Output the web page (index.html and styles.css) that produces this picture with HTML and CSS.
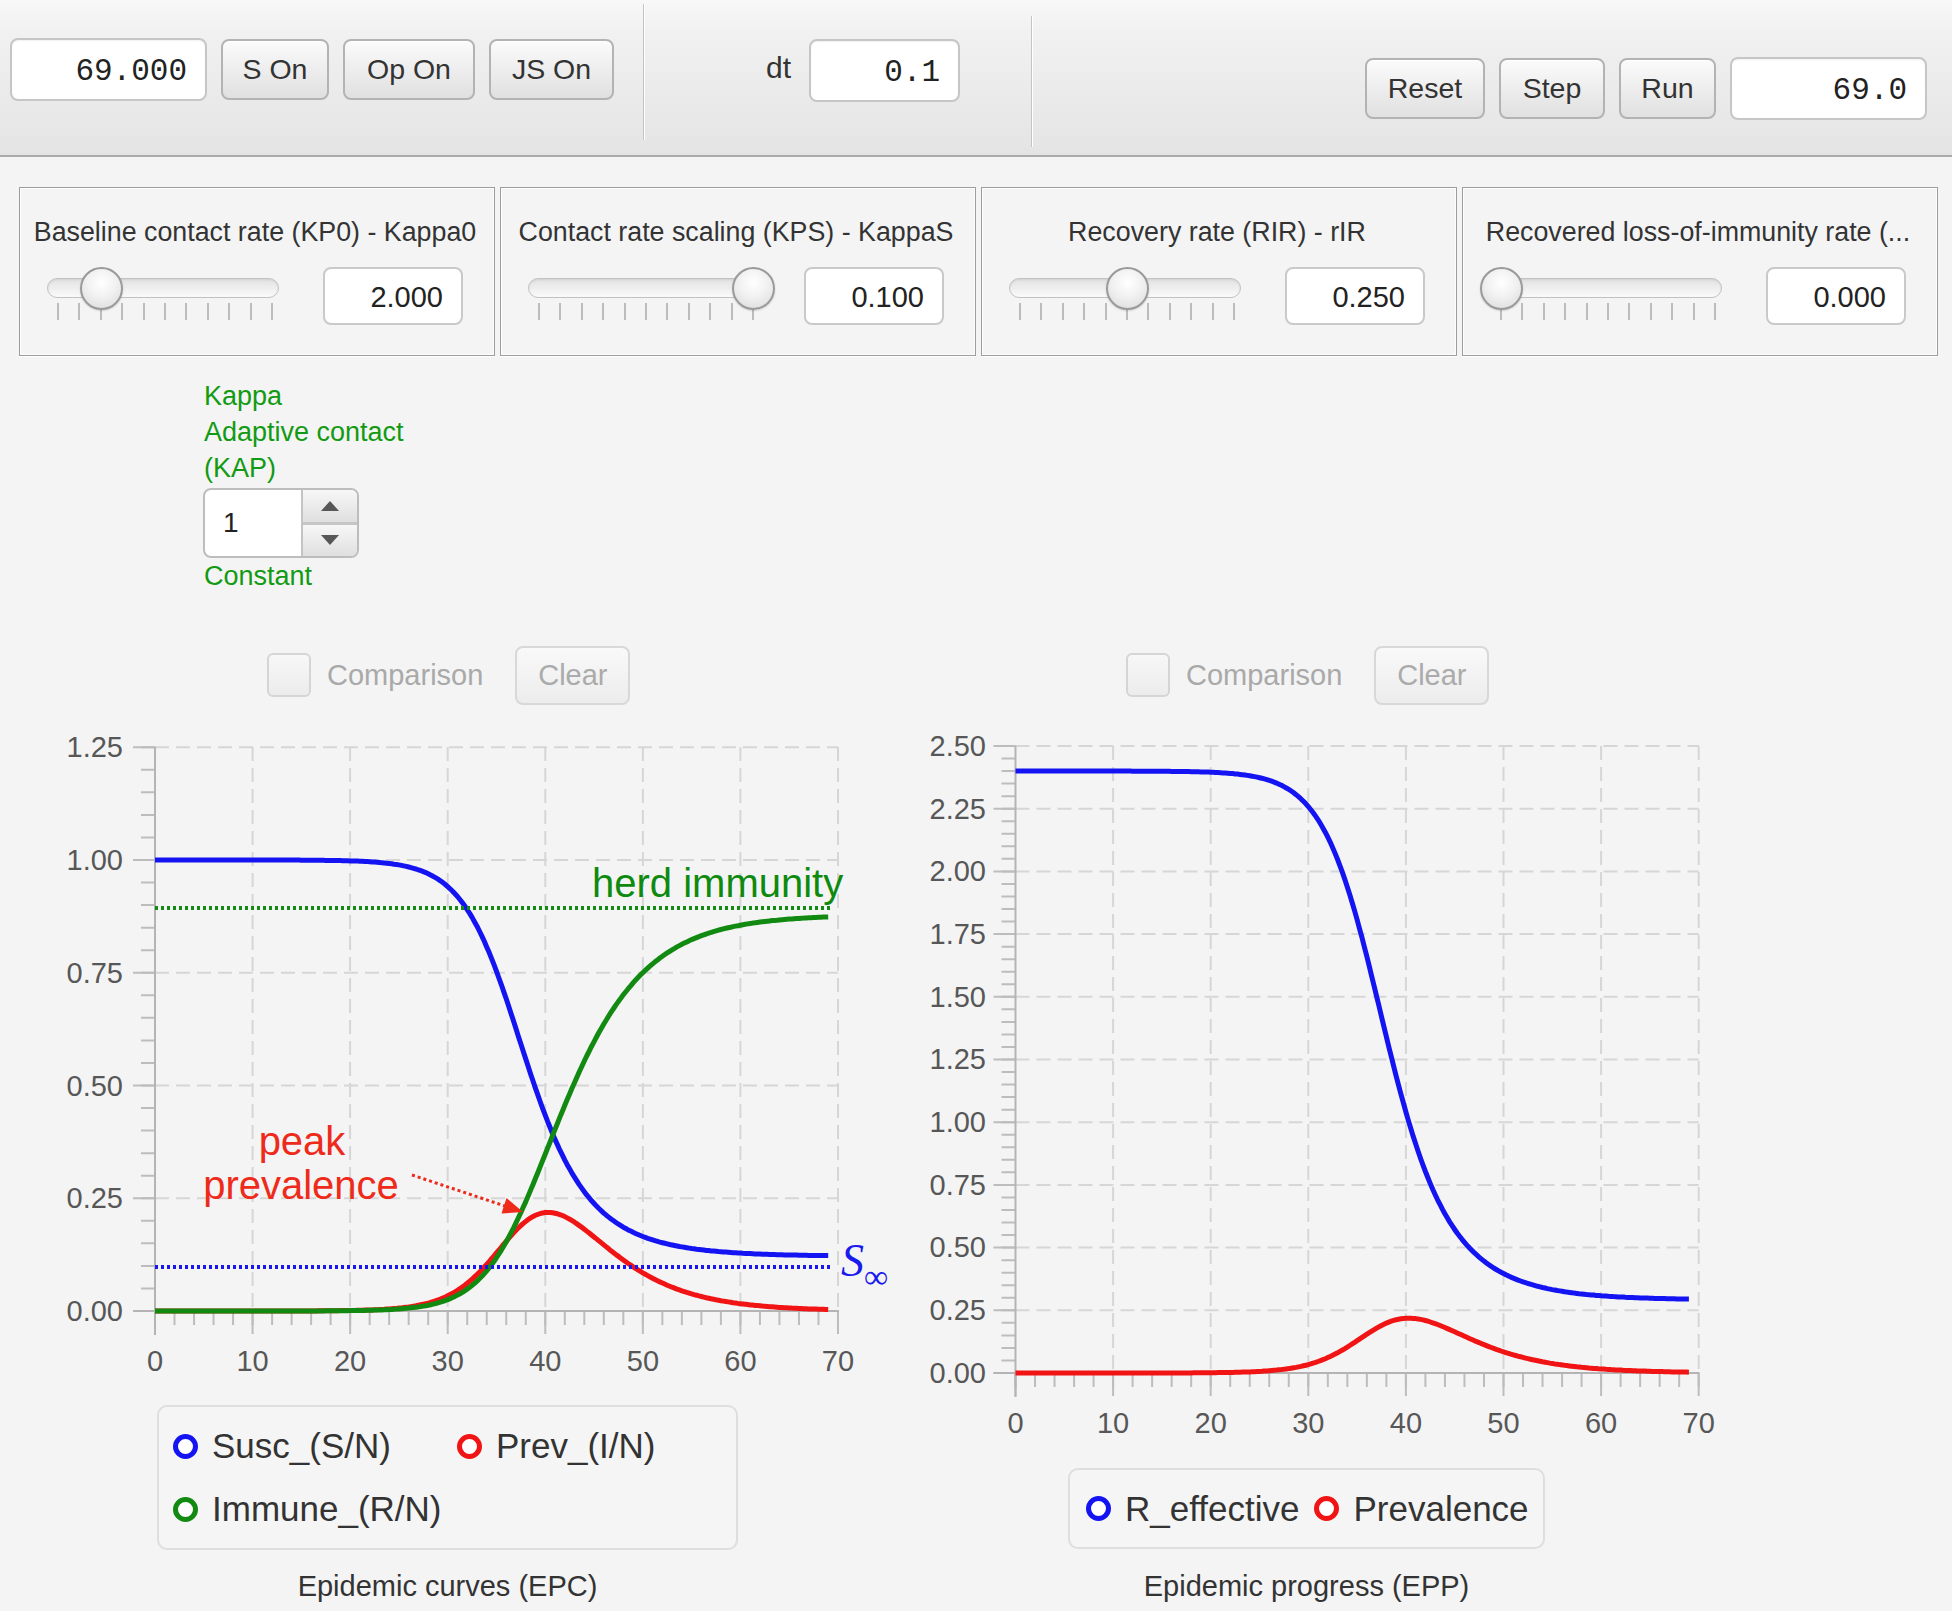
FILE: index.html
```html
<!DOCTYPE html>
<html lang="en">
<head>
<meta charset="utf-8">
<title>Epidemic model</title>
<link rel="stylesheet" href="styles.css">
</head>
<body>
<div class="toolbar">
  <div class="tb-left">
    <div class="tfield tf-time">69.000</div>
    <button class="btn b-son">S On</button>
    <button class="btn b-opon">Op On</button>
    <button class="btn b-json">JS On</button>
  </div>
  <div class="sep sep1"></div>
  <div class="tb-dt">
    <span class="dt-label">dt</span>
    <div class="tfield tf-dt">0.1</div>
  </div>
  <div class="sep sep2"></div>
  <div class="tb-right">
    <button class="btn b-reset">Reset</button>
    <button class="btn b-step">Step</button>
    <button class="btn b-run">Run</button>
    <div class="tfield tf-clock">69.0</div>
  </div>
</div>

<div class="params">
  <div class="param">
    <div class="param-title">Baseline contact rate (KP0) - Kappa0</div>
    <div class="param-row">
      <div class="slider">
        <div class="track"></div>
        <div class="ticks"></div>
        <div class="thumb" style="left:54px"></div>
      </div>
      <div class="vfield">2.000</div>
    </div>
  </div>
  <div class="param">
    <div class="param-title">Contact rate scaling (KPS) - KappaS</div>
    <div class="param-row">
      <div class="slider">
        <div class="track"></div>
        <div class="ticks"></div>
        <div class="thumb" style="left:225px"></div>
      </div>
      <div class="vfield">0.100</div>
    </div>
  </div>
  <div class="param">
    <div class="param-title">Recovery rate (RIR) - rIR</div>
    <div class="param-row">
      <div class="slider">
        <div class="track"></div>
        <div class="ticks"></div>
        <div class="thumb" style="left:118px"></div>
      </div>
      <div class="vfield">0.250</div>
    </div>
  </div>
  <div class="param">
    <div class="param-title">Recovered loss-of-immunity rate (...</div>
    <div class="param-row">
      <div class="slider">
        <div class="track"></div>
        <div class="ticks"></div>
        <div class="thumb" style="left:11px"></div>
      </div>
      <div class="vfield">0.000</div>
    </div>
  </div>
</div>

<div class="kappa">
  <div class="klabel">Kappa</div>
  <div class="klabel">Adaptive contact</div>
  <div class="klabel">(KAP)</div>
  <div class="spinner">
    <div class="spin-value">1</div>
    <div class="spin-btns">
      <div class="spin-btn spin-up"><svg width="20" height="12" viewBox="0 0 20 12"><polygon points="10,1 19,11 1,11" class="arrow"/></svg></div>
      <div class="spin-btn spin-down"><svg width="20" height="12" viewBox="0 0 20 12"><polygon points="1,1 19,1 10,11" class="arrow"/></svg></div>
    </div>
  </div>
  <div class="klabel">Constant</div>
</div>

<div class="charts">
  <div class="chart chart-epc">
    <div class="compare compare-epc">
      <span class="checkbox"></span>
      <span class="compare-label">Comparison</span>
      <button class="btn-clear">Clear</button>
    </div>
    <svg class="plot" width="895" height="670" viewBox="0 0 895 670">
      <g class="grid">
        <line x1="155" y1="28.25" x2="838" y2="28.25"/>
        <line x1="155" y1="141" x2="838" y2="141"/>
        <line x1="155" y1="253.75" x2="838" y2="253.75"/>
        <line x1="155" y1="366.5" x2="838" y2="366.5"/>
        <line x1="155" y1="479.25" x2="838" y2="479.25"/>
        <line x1="252.6" y1="28" x2="252.6" y2="592"/>
        <line x1="350.1" y1="28" x2="350.1" y2="592"/>
        <line x1="447.7" y1="28" x2="447.7" y2="592"/>
        <line x1="545.3" y1="28" x2="545.3" y2="592"/>
        <line x1="642.9" y1="28" x2="642.9" y2="592"/>
        <line x1="740.4" y1="28" x2="740.4" y2="592"/>
        <line x1="838" y1="28" x2="838" y2="592"/>
      </g>
      <g class="ticks-g">
        <line class="tk-minor" x1="148" y1="593" x2="148" y2="27" stroke-dasharray="2 20.55"/>
        <line class="tk-major" x1="144" y1="593" x2="144" y2="27" stroke-dasharray="2 110.75"/>
        <line class="tk-minor" x1="154" y1="599" x2="840" y2="599" stroke-dasharray="2 17.514"/>
        <line class="tk-major" x1="154" y1="604" x2="840" y2="604" stroke-dasharray="2 95.57"/>
        <line class="axis" x1="155" y1="28" x2="155" y2="616"/>
        <line class="axis" x1="133" y1="592" x2="839" y2="592"/>
      </g>
      <g class="ylabels">
        <text x="123" y="38">1.25</text>
        <text x="123" y="151">1.00</text>
        <text x="123" y="264">0.75</text>
        <text x="123" y="377">0.50</text>
        <text x="123" y="489">0.25</text>
        <text x="123" y="602">0.00</text>
      </g>
      <g class="xlabels">
        <text x="155" y="652">0</text>
        <text x="252.6" y="652">10</text>
        <text x="350.1" y="652">20</text>
        <text x="447.7" y="652">30</text>
        <text x="545.3" y="652">40</text>
        <text x="642.9" y="652">50</text>
        <text x="740.4" y="652">60</text>
        <text x="838" y="652">70</text>
      </g>
      <path id="epc-s" class="curve c-blue" d=""/>
      <path id="epc-i" class="curve c-red" d=""/>
      <path id="epc-r" class="curve c-green" d=""/>
      <line class="dot-green" x1="155" y1="189" x2="832" y2="189"/>
      <line class="dot-blue" x1="155" y1="548" x2="832" y2="548"/>
      <text class="note-green" x="592" y="178">herd immunity</text>
      <text class="note-red" x="302" y="436">peak</text>
      <text class="note-red" x="301" y="480">prevalence</text>
      <line class="dot-red" x1="412" y1="456" x2="505" y2="487"/>
      <polygon class="arrow-red" points="523,493 506.5,479 501.5,494.5"/>
      <text class="note-s" x="841" y="557">S<tspan class="note-inf" dy="12">∞</tspan></text>
    </svg>
    <div class="legend legend-epc">
      <div class="legend-item"><span class="marker m-blue"></span>Susc_(S/N)</div>
      <div class="legend-item"><span class="marker m-red"></span>Prev_(I/N)</div>
      <div class="legend-item"><span class="marker m-green"></span>Immune_(R/N)</div>
    </div>
    <div class="caption caption-epc">Epidemic curves (EPC)</div>
  </div>

  <div class="chart chart-epp">
    <div class="compare compare-epp">
      <span class="checkbox"></span>
      <span class="compare-label">Comparison</span>
      <button class="btn-clear">Clear</button>
    </div>
    <svg class="plot" width="823" height="732" viewBox="0 0 823 732">
      <g class="grid">
        <line x1="120.5" y1="27" x2="803.7" y2="27"/>
        <line x1="120.5" y1="89.7" x2="803.7" y2="89.7"/>
        <line x1="120.5" y1="152.4" x2="803.7" y2="152.4"/>
        <line x1="120.5" y1="215.1" x2="803.7" y2="215.1"/>
        <line x1="120.5" y1="277.8" x2="803.7" y2="277.8"/>
        <line x1="120.5" y1="340.5" x2="803.7" y2="340.5"/>
        <line x1="120.5" y1="403.2" x2="803.7" y2="403.2"/>
        <line x1="120.5" y1="465.9" x2="803.7" y2="465.9"/>
        <line x1="120.5" y1="528.6" x2="803.7" y2="528.6"/>
        <line x1="120.5" y1="591.3" x2="803.7" y2="591.3"/>
        <line x1="218.1" y1="27" x2="218.1" y2="654"/>
        <line x1="315.7" y1="27" x2="315.7" y2="654"/>
        <line x1="413.3" y1="27" x2="413.3" y2="654"/>
        <line x1="510.9" y1="27" x2="510.9" y2="654"/>
        <line x1="608.5" y1="27" x2="608.5" y2="654"/>
        <line x1="706.1" y1="27" x2="706.1" y2="654"/>
        <line x1="803.7" y1="27" x2="803.7" y2="654"/>
      </g>
      <g class="ticks-g">
        <line class="tk-minor" x1="113.5" y1="655" x2="113.5" y2="26" stroke-dasharray="2 10.54"/>
        <line class="tk-major" x1="109.5" y1="655" x2="109.5" y2="26" stroke-dasharray="2 60.7"/>
        <line class="tk-minor" x1="119.5" y1="661" x2="805" y2="661" stroke-dasharray="2 17.52"/>
        <line class="tk-major" x1="119.5" y1="666" x2="805" y2="666" stroke-dasharray="2 95.6"/>
        <line class="axis" x1="120.5" y1="27" x2="120.5" y2="678"/>
        <line class="axis" x1="98.5" y1="654" x2="804.5" y2="654"/>
      </g>
      <g class="ylabels">
        <text x="91" y="37">2.50</text>
        <text x="91" y="100">2.25</text>
        <text x="91" y="162">2.00</text>
        <text x="91" y="225">1.75</text>
        <text x="91" y="288">1.50</text>
        <text x="91" y="350">1.25</text>
        <text x="91" y="413">1.00</text>
        <text x="91" y="476">0.75</text>
        <text x="91" y="538">0.50</text>
        <text x="91" y="601">0.25</text>
        <text x="91" y="664">0.00</text>
      </g>
      <g class="xlabels">
        <text x="120.5" y="714">0</text>
        <text x="218.1" y="714">10</text>
        <text x="315.7" y="714">20</text>
        <text x="413.3" y="714">30</text>
        <text x="510.9" y="714">40</text>
        <text x="608.5" y="714">50</text>
        <text x="706.1" y="714">60</text>
        <text x="803.7" y="714">70</text>
      </g>
      <path id="epp-r" class="curve c-blue" d=""/>
      <path id="epp-i" class="curve c-red" d=""/>
    </svg>
    <div class="legend legend-epp">
      <div class="legend-item"><span class="marker m-blue"></span>R_effective</div>
      <div class="legend-item"><span class="marker m-red"></span>Prevalence</div>
    </div>
    <div class="caption caption-epp">Epidemic progress (EPP)</div>
  </div>
</div>
<script src="script.js"></script>
</body>
</html>
```

FILE: styles.css
```css
* { box-sizing: border-box; }

body {
  margin: 0;
  width: 1952px;
  height: 1611px;
  overflow: hidden;
  background: #f4f4f4;
  font-family: "Liberation Sans", Arial, sans-serif;
  color: #333;
}

/* ---------- toolbar ---------- */
.toolbar {
  display: flex;
  align-items: flex-start;
  height: 157px;
  border-bottom: 2px solid #ababab;
  background: linear-gradient(#f8f8f8 0, #f1f1f1 20%, #e4e4e4 100%);
}
.tb-left {
  display: flex;
  align-items: center;
  gap: 14px;
  margin: 38px 0 0 10px;
}
.tfield {
  display: flex;
  align-items: center;
  justify-content: flex-end;
  height: 63px;
  padding: 4px 18px 0 0;
  background: #fff;
  border: 2px solid #c6c6c6;
  border-radius: 8px;
  box-shadow: inset 0 1px 2px rgba(0,0,0,0.06);
  font-family: "Liberation Mono", "DejaVu Sans Mono", monospace;
  font-size: 31px;
  color: #222;
}
.tf-time { width: 197px; }
.tf-dt { width: 151px; }
.tf-clock { width: 197px; }

.btn {
  height: 61px;
  padding: 0;
  background: linear-gradient(#fbfbfb, #e0e0e0);
  border: 2px solid #b3b3b3;
  border-radius: 8px;
  box-shadow: inset 0 1px 0 #fff;
  font-family: "Liberation Sans", Arial, sans-serif;
  font-size: 28.5px;
  color: #333;
}
.b-son { width: 108px; }
.b-opon { width: 132px; }
.b-json { width: 125px; }
.b-reset { width: 120px; }
.b-step { width: 106px; }
.b-run { width: 97px; }

.sep {
  width: 2px;
  background: linear-gradient(90deg, #c4c4c4 50%, #ffffff 50%);
}
.sep1 { margin: 4px 0 0 29px; height: 136px; }
.sep2 { margin: 16px 0 0 71px; height: 131px; }

.tb-dt {
  display: flex;
  align-items: center;
  gap: 18px;
  margin: 39px 0 0 121px;
}
.dt-label { font-size: 30px; color: #333; margin-top: -6px; }

.tb-right {
  display: flex;
  align-items: center;
  gap: 14px;
  margin: 57px 25px 0 auto;
}

/* ---------- parameter sliders ---------- */
.params {
  display: flex;
  gap: 5px;
  margin: 30px 0 0 19px;
}
.param {
  width: 476px;
  height: 169px;
  padding: 28px 31px 0 27px;
  border: 1px solid #9d9d9d;
  box-shadow: inset 0 0 0 1px #fdfdfd, 0 1px 0 #fff;
}
.param-title {
  text-align: center;
  white-space: nowrap;
  font-size: 26.8px;
  line-height: 32px;
  color: #333;
  margin: 0 -20px;
}
.param-row {
  display: flex;
  justify-content: space-between;
  margin-top: 19px;
}
.slider {
  position: relative;
  width: 232px;
  height: 56px;
  padding-top: 11px;
}
.track {
  height: 20px;
  border-radius: 10px;
  border: 1px solid #c2c2c2;
  background: linear-gradient(#e2e2e2, #fafafa);
  box-shadow: inset 0 1px 2px rgba(0,0,0,0.08);
}
.ticks {
  width: 216px;
  height: 17px;
  margin: 5px 0 0 10px;
  background: repeating-linear-gradient(90deg, #bcbcbc 0 2px, transparent 2px 21.4px);
}
.thumb {
  position: absolute;
  top: 0;
  width: 43px;
  height: 43px;
  margin-left: -21.5px;
  border-radius: 50%;
  border: 2px solid #9a9a9a;
  background: radial-gradient(circle at 50% 35%, #ffffff 0, #f1f1f1 45%, #d9d9d9 100%);
  box-shadow: 0 1px 2px rgba(0,0,0,0.15);
}
.vfield {
  width: 140px;
  height: 58px;
  padding-right: 18px;
  background: #fff;
  border: 2px solid #c9c9c9;
  border-radius: 8px;
  text-align: right;
  font-size: 29px;
  line-height: 56px;
  color: #222;
}

/* ---------- kappa spinner ---------- */
.kappa {
  width: 200px;
  margin: 22px 0 0 204px;
}
.klabel {
  font-size: 27px;
  line-height: 36px;
  color: #139a13;
  white-space: nowrap;
}
.spinner {
  display: flex;
  width: 156px;
  height: 70px;
  margin: 2px 0 0 -1px;
  border: 2px solid #bdbdbd;
  border-radius: 8px;
  overflow: hidden;
  background: #fff;
}
.spin-value {
  flex: 1;
  padding-left: 18px;
  font-size: 28px;
  line-height: 66px;
  color: #222;
}
.spin-btns {
  display: flex;
  flex-direction: column;
  width: 56px;
  border-left: 2px solid #c4c4c4;
}
.spin-btn {
  flex: 1;
  display: flex;
  align-items: center;
  justify-content: center;
  background: linear-gradient(#f7f7f7, #dfdfdf);
}
.spin-up { border-bottom: 3px solid #c6c6c6; }
.arrow { fill: #575757; }

/* ---------- charts ---------- */
.charts {
  display: flex;
  margin-top: 51px;
}
.chart { display: flex; flex-direction: column; }
.chart-epc { width: 895px; }
.chart-epp { width: 823px; }

.compare {
  display: flex;
  align-items: center;
  height: 60px;
}
.compare-epc { padding-left: 267px; }
.compare-epp { padding-left: 231px; }
.checkbox {
  width: 44px;
  height: 44px;
  border: 2px solid #d5d5d5;
  border-radius: 6px;
  background: linear-gradient(#f7f7f7, #ececec);
}
.compare-label {
  margin-left: 16px;
  font-size: 29px;
  color: #a9a9a9;
}
.btn-clear {
  width: 115px;
  height: 59px;
  margin-left: 32px;
  padding: 0;
  border: 2px solid #d8d8d8;
  border-radius: 8px;
  background: linear-gradient(#f9f9f9, #ececec);
  font-family: "Liberation Sans", Arial, sans-serif;
  font-size: 29px;
  color: #ababab;
}

.plot { display: block; margin-top: 14px; overflow: visible; }

.grid line {
  stroke: #d6d6d6;
  stroke-width: 2;
  stroke-dasharray: 14 7;
}
.tk-minor { stroke: #bdbdbd; stroke-width: 14; }
.tk-major { stroke: #bdbdbd; stroke-width: 22; }
.axis { stroke: #b4b4b4; stroke-width: 2; }

.ylabels text {
  font-family: "Liberation Sans", Arial, sans-serif;
  font-size: 29px;
  fill: #575757;
  text-anchor: end;
}
.xlabels text {
  font-family: "Liberation Sans", Arial, sans-serif;
  font-size: 29px;
  fill: #575757;
  text-anchor: middle;
}

.curve {
  fill: none;
  stroke-width: 5;
  stroke-linejoin: round;
  stroke-linecap: butt;
}
.c-blue { stroke: #1414f2; }
.c-red { stroke: #f01414; }
.c-green { stroke: #128a12; }

.dot-green { stroke: #138a13; stroke-width: 4; stroke-dasharray: 3 3; }
.dot-blue { stroke: #1717ee; stroke-width: 4; stroke-dasharray: 3 3; }
.dot-red { stroke: #ee2a1a; stroke-width: 3; stroke-dasharray: 3 3; }
.arrow-red { fill: #ee2a1a; }

.note-green {
  font-family: "Liberation Sans", Arial, sans-serif;
  font-size: 40px;
  fill: #0e8a0e;
}
.note-red {
  font-family: "Liberation Sans", Arial, sans-serif;
  font-size: 40px;
  fill: #ee2a1a;
  text-anchor: middle;
}
.note-s {
  font-family: "Liberation Serif", "Times New Roman", serif;
  font-style: italic;
  font-size: 46px;
  fill: #1a1aee;
}
.note-inf { font-size: 34px; font-style: normal; }

.legend {
  margin-left: auto;
  margin-right: auto;
  border: 2px solid #dedede;
  border-radius: 10px;
  background: #f5f5f5;
}
.legend-epc {
  display: grid;
  grid-template-columns: 284px 284px;
  align-content: start;
  row-gap: 21px;
  width: 581px;
  height: 145px;
  margin-top: 16px;
  padding: 18px 0 0 14px;
}
.legend-epp {
  display: flex;
  align-items: center;
  gap: 15px;
  width: 477px;
  height: 81px;
  margin-top: 17px;
  padding-left: 16px;
}
.legend-item {
  display: flex;
  align-items: center;
  gap: 14px;
  font-size: 35px;
  line-height: 42px;
  color: #333;
  white-space: nowrap;
}
.marker {
  width: 25px;
  height: 25px;
  border-radius: 50%;
  border: 5px solid;
  background: #fff;
  flex: none;
}
.m-blue { border-color: #1414f2; }
.m-red { border-color: #f01414; }
.m-green { border-color: #128a12; }

.caption {
  text-align: center;
  font-size: 29px;
  line-height: 36px;
  color: #333;
}
.caption-epc { margin-top: 18px; }
.caption-epp { margin-top: 19px; }
```

FILE: script.js
```js
(function () {
  var beta = 0.6, gamma = 0.25, h = 0.02;
  var S = 1 - 1e-8, I = 1e-8;
  var data = [];
  function f(s, i) {
    var inf = beta * s * i;
    return [-inf, inf - gamma * i];
  }
  for (var n = 0; n < 15000; n++) {
    data.push([S, I]);
    var k1 = f(S, I);
    var k2 = f(S + h / 2 * k1[0], I + h / 2 * k1[1]);
    var k3 = f(S + h / 2 * k2[0], I + h / 2 * k2[1]);
    var k4 = f(S + h * k3[0], I + h * k3[1]);
    S += h / 6 * (k1[0] + 2 * k2[0] + 2 * k3[0] + k4[0]);
    I += h / 6 * (k1[1] + 2 * k2[1] + 2 * k3[1] + k4[1]);
  }
  var peak = 0;
  for (var k = 1; k < data.length; k++) {
    if (data[k][1] > data[peak][1]) peak = k;
  }
  var offset = peak * h - 40.3;

  function at(t) {
    var x = (t + offset) / h;
    var j = Math.floor(x);
    if (j < 0) return data[0];
    if (j >= data.length - 1) return data[data.length - 1];
    var fr = x - j;
    return [
      data[j][0] + (data[j + 1][0] - data[j][0]) * fr,
      data[j][1] + (data[j + 1][1] - data[j][1]) * fr
    ];
  }

  function draw(id, x0, xs, y0, ys, fn) {
    var d = '';
    for (var t = 0; t <= 69.0001; t += 0.25) {
      var v = fn(at(t));
      d += (d ? 'L' : 'M') + (x0 + xs * t).toFixed(1) + ',' + (y0 - ys * v).toFixed(1);
    }
    document.getElementById(id).setAttribute('d', d);
  }

  draw('epc-s', 155, 9.757, 592, 451, function (p) { return p[0]; });
  draw('epc-i', 155, 9.757, 592, 451, function (p) { return p[1]; });
  draw('epc-r', 155, 9.757, 592, 451, function (p) { return 1 - p[0] - p[1]; });
  draw('epp-r', 120.5, 9.76, 654, 250.8, function (p) { return 2.4 * p[0]; });
  draw('epp-i', 120.5, 9.76, 654, 250.8, function (p) { return p[1]; });
})();
```
